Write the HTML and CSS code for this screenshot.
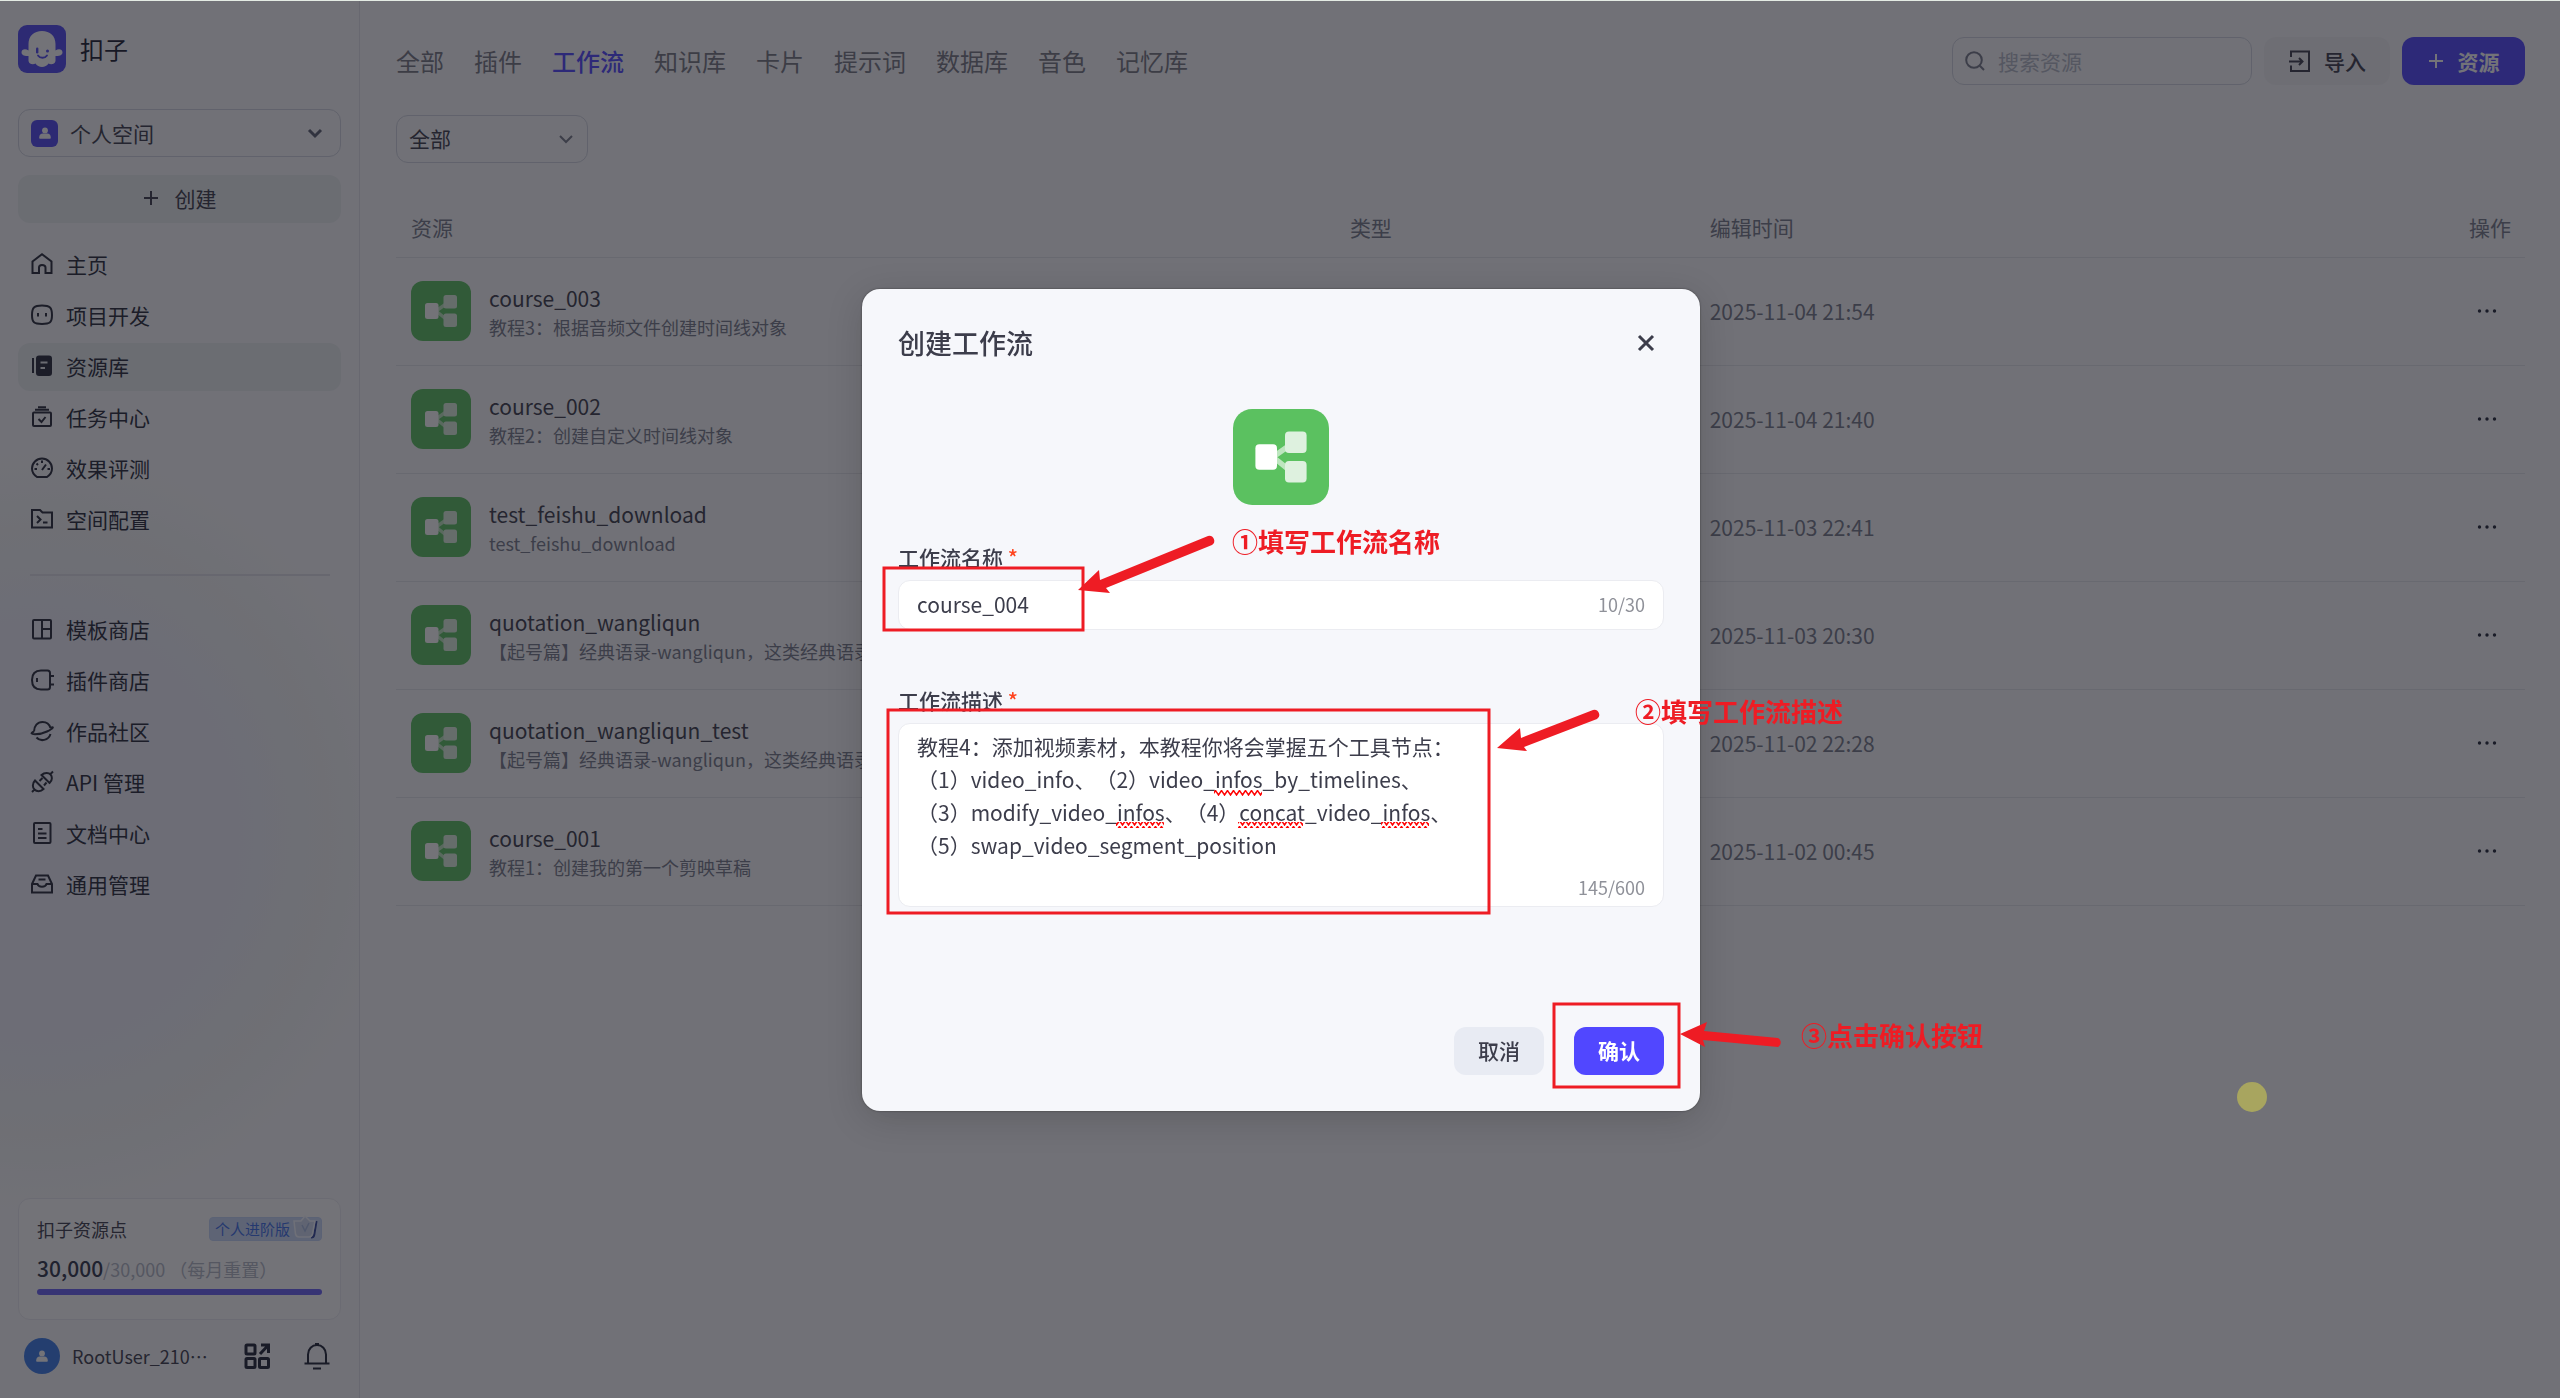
FILE: index.html
```html
<!DOCTYPE html>
<html lang="zh-CN">
<head>
    <meta charset="UTF-8">
    <meta name="viewport" content="width=device-width, initial-scale=1.0">
    <title>扣子 - 资源库</title>
    <link rel="stylesheet" href="styles.css">
</head>
<body>
    <!-- shared icons -->
    <svg class="sprite" aria-hidden="true">
        <symbol id="i-plus" viewBox="0 0 16 16"><path d="M8 1v14M1 8h14"/></symbol>
        <symbol id="i-down" viewBox="0 0 16 16"><path d="M2 5l6 6 6-6"/></symbol>
        <symbol id="i-person" viewBox="0 0 24 24"><circle cx="12" cy="7.5" r="5"/><path d="M2 20c0-5 3-7 6-7h8c3 0 6 2 6 7 0 1-1 2-2 2H4c-1 0-2-1-2-2z"/></symbol>
        <symbol id="i-dots" viewBox="0 0 24 24"><circle cx="4.5" cy="12" r="1.7"/><circle cx="12" cy="12" r="1.7"/><circle cx="19.5" cy="12" r="1.7"/></symbol>
        <symbol id="i-flow" viewBox="0 0 60 60">
            <rect width="60" height="60" rx="12" fill="#5bc160"/>
            <path d="M25 30l10-7M25 30l10 8" stroke="#fff" stroke-opacity=".6" stroke-width="3.4"/>
            <rect x="32.500" y="14" width="13.500" height="13.500" rx="2.500" fill="#def1df"/>
            <rect x="32.500" y="32.500" width="13.500" height="13.500" rx="2.500" fill="#def1df"/>
            <rect x="14" y="22" width="13.500" height="16" rx="2.500" fill="#fff"/>
        </symbol>
    </svg>

    <div class="layout">
        <aside class="sidebar">
            <div class="brand">
                <svg class="logo" viewBox="0 0 48 48">
                    <rect width="48" height="48" rx="9" fill="#5049f2"/>
                    <path fill="#fff" d="M10.500 19C10.500 11 16 6 24 6s13.500 5 13.500 13v6.500c3-2 7-1.500 7 2 0 3-4 3.500-7 3.500V36c-.5 3.500-5 4-7 2.500-2.500 4.500-10.500 4.500-13 0-2 1.500-6.500 1-7-2.500v-5c-3 0-7-.5-7-3.500 0-3.500 4-4 7-2z"/>
                    <rect x="18" y="22.500" width="2.400" height="6" rx="1.200" fill="#5049f2"/>
                    <circle cx="29.500" cy="26" r="1.500" fill="#5049f2"/>
                    <path d="M20 30.500c2 3 7 3 9 0" fill="none" stroke="#5049f2" stroke-width="1.800" stroke-linecap="round"/>
                </svg>
                <span>扣子</span>
            </div>

            <button class="space" type="button">
                <span class="space-icon"><svg class="solid"><use href="#i-person"/></svg></span>
                <span class="space-name">个人空间</span>
                <svg class="line chevron"><use href="#i-down"/></svg>
            </button>
            <button class="create" type="button"><svg class="line"><use href="#i-plus"/></svg>创建</button>

            <nav class="menu">
                <a href="#"><svg viewBox="0 0 24 24"><path d="M2.500 9.500L12 2.200l9.500 7.300V21h-6v-5.500c0-1.500-1-2.500-3.500-2.500s-3 1-3 2.500V21h-6.500z"/></svg>主页</a>
                <a href="#"><svg viewBox="0 0 24 24"><path d="M12 2.500c8 0 10 2 10 9.500s-2 9-10 9-10-1.500-10-9 2-9.500 10-9.500z"/><path d="M8 10v3.500M16 10v3.500"/></svg>项目开发</a>
                <a href="#" class="active"><svg viewBox="0 0 24 24"><path d="M3 4v15"/><rect x="7" y="2.500" width="14" height="18.500" rx="2" fill="currentColor"/><path d="M10.500 8.500h7M10.500 14h4.500" stroke="#e8ecee"/></svg>资源库</a>
                <a href="#"><svg viewBox="0 0 24 24"><rect x="3" y="7.500" width="18" height="13.500" rx="1"/><path d="M5 4.800h14M8 2.200h8M8.500 14l3 3 4-5"/></svg>任务中心</a>
                <a href="#"><svg viewBox="0 0 24 24"><path d="M7 21c-3-2-5-5-5-8.500a10 10 0 0 1 20 0c0 3.500-2 6.500-5 8.500zM12 14l4-5.500M12 4.500v2.500M4.500 13H7M17.500 13H20M6.500 7.500l1.500 1.500"/></svg>效果评测</a>
                <a href="#"><svg viewBox="0 0 24 24"><path d="M2 3h8l2.500 2.500H22V20.500H2zM7 9l3.500 3.500L7 16M13 15.500h4.500"/></svg>空间配置</a>
            </nav>
            <hr>
            <nav class="menu">
                <a href="#"><svg viewBox="0 0 24 24"><rect x="3" y="3" width="18" height="18.500" rx="1"/><path d="M12 3v18.500M12 12h9"/></svg>模板商店</a>
                <a href="#"><svg viewBox="0 0 24 24"><path d="M11 2.500h6.500c2 0 2.500 1 2.500 2.500v14c0 1.500-.5 2.500-2.500 2.500H11c-6 0-9-3-9-9.500s3-9.500 9-9.500zM20 8h4M20 16.500h4M7 10v4"/></svg>插件商店</a>
                <a href="#"><svg viewBox="0 0 24 24"><path d="M4 12.500C4 7 7.500 3 12.500 3c4 0 7 2.500 8 6M4 12.500C-4 16 10 16 17 12.500S24 7 20.500 9M6.500 18.500c4 4.500 12 3 14-3.500"/></svg>作品社区</a>
                <a href="#"><svg viewBox="0 0 24 24"><path d="M2 22l2.500-2.500M5 10.500l8.500 8.500c-3 3-7 2.500-9 .5s-2.500-6 .5-9zM9.500 11l3-3M14 15.500l2.500-3M11.500 5l8 8c3.500-3 2.500-7 1-8.500s-5.500-2.500-9 .5zM20.500 4L23 1.500"/></svg>API 管理</a>
                <a href="#"><svg viewBox="0 0 24 24"><rect x="4" y="2" width="16.500" height="20" rx="1"/><path d="M8 8h4.500M8 12.500h8.500M8 17h8.500"/></svg>文档中心</a>
                <a href="#"><svg viewBox="0 0 24 24"><path d="M2 12l4-8.500h12L22 12v8.500H2zM2 12h5.500c1 3.500 8 3.500 9 0H22M8.500 7.500h7"/></svg>通用管理</a>
            </nav>

            <div class="bottom">
                <section class="credits">
                    <div class="credits-top">
                        <span>扣子资源点</span>
                        <a href="#" class="plan">个人进阶版<svg viewBox="0 0 28 27"><path d="M20 23.500c2 0 3-1 3.300-3L25.500 7" fill="none" stroke="#33479c"/><path d="M3 7h7l4-5 5 5h5l-2.500 13c-.5 2-1.500 3-3.500 3H8c-2 0-3-1-3.500-3z" fill="#cfdaf0" stroke="#f4f8ff" stroke-width="1.500"/><path d="M11 11l3 6 4-8" fill="none" stroke="#a9bbe0" stroke-width="1.500"/></svg></a>
                    </div>
                    <div class="amount"><b>30,000</b>/30,000 （每月重置）</div>
                    <div class="bar"></div>
                </section>
                <div class="user">
                    <span class="avatar"><svg class="solid"><use href="#i-person"/></svg></span>
                    <span class="user-name">RootUser_210…</span>
                    <button type="button" aria-label="应用"><svg viewBox="0 0 28 28"><rect x="3" y="3" width="9" height="9" rx="1"/><rect x="3" y="16.500" width="9" height="9" rx="1"/><rect x="16.500" y="16.500" width="9" height="9" rx="1"/><path d="M17 12l8.500-9M18 3h7.500v8"/></svg></button>
                    <button type="button" aria-label="通知"><svg class="bell" viewBox="0 0 28 28"><path d="M5 21.500V12.500c0-5.500 4-9.500 9-9.500s9 4 9 9.500v9M1.500 21.500h25M10 26.500h8M12 2h4"/></svg></button>
                </div>
            </div>
        </aside>

        <main class="main">
            <header class="topbar">
                <nav class="tabs">
                    <a href="#">全部</a>
                    <a href="#">插件</a>
                    <a href="#" class="current">工作流</a>
                    <a href="#">知识库</a>
                    <a href="#">卡片</a>
                    <a href="#">提示词</a>
                    <a href="#">数据库</a>
                    <a href="#">音色</a>
                    <a href="#">记忆库</a>
                </nav>
                <div class="tools">
                    <label class="search">
                        <svg viewBox="0 0 20 20"><circle cx="9" cy="9" r="7.800"/><path d="M14.800 14.800L19 19"/></svg>
                        <input type="text" placeholder="搜索资源" aria-label="搜索资源">
                    </label>
                    <button type="button" class="import"><svg viewBox="0 0 24 24"><path d="M3 8V2.500h18V22H3v-5.500M1 12.500h13M11 9l3.500 3.500L11 16"/></svg>导入</button>
                    <button type="button" class="primary"><svg class="line"><use href="#i-plus"/></svg>资源</button>
                </div>
            </header>

            <div class="filter">
                <select aria-label="筛选"><option>全部</option></select>
                <svg class="line"><use href="#i-down"/></svg>
            </div>

            <table class="resources">
                <thead>
                    <tr><th class="c-name">资源</th><th class="c-type">类型</th><th>编辑时间</th><th class="c-action">操作</th></tr>
                </thead>
                <tbody>
                    <tr>
                        <td><div class="res"><svg><use href="#i-flow"/></svg><div class="res-text"><p class="name">course_003</p><p class="desc">教程3：根据音频文件创建时间线对象</p></div></div></td>
                        <td></td><td>2025-11-04 21:54</td>
                        <td><button type="button" aria-label="更多"><svg><use href="#i-dots"/></svg></button></td>
                    </tr>
                    <tr>
                        <td><div class="res"><svg><use href="#i-flow"/></svg><div class="res-text"><p class="name">course_002</p><p class="desc">教程2：创建自定义时间线对象</p></div></div></td>
                        <td></td><td>2025-11-04 21:40</td>
                        <td><button type="button" aria-label="更多"><svg><use href="#i-dots"/></svg></button></td>
                    </tr>
                    <tr>
                        <td><div class="res"><svg><use href="#i-flow"/></svg><div class="res-text"><p class="name">test_feishu_download</p><p class="desc">test_feishu_download</p></div></div></td>
                        <td></td><td>2025-11-03 22:41</td>
                        <td><button type="button" aria-label="更多"><svg><use href="#i-dots"/></svg></button></td>
                    </tr>
                    <tr>
                        <td><div class="res"><svg><use href="#i-flow"/></svg><div class="res-text"><p class="name">quotation_wangliqun</p><p class="desc">【起号篇】经典语录-wangliqun，这类经典语录</p></div></div></td>
                        <td></td><td>2025-11-03 20:30</td>
                        <td><button type="button" aria-label="更多"><svg><use href="#i-dots"/></svg></button></td>
                    </tr>
                    <tr>
                        <td><div class="res"><svg><use href="#i-flow"/></svg><div class="res-text"><p class="name">quotation_wangliqun_test</p><p class="desc">【起号篇】经典语录-wangliqun，这类经典语录</p></div></div></td>
                        <td></td><td>2025-11-02 22:28</td>
                        <td><button type="button" aria-label="更多"><svg><use href="#i-dots"/></svg></button></td>
                    </tr>
                    <tr>
                        <td><div class="res"><svg><use href="#i-flow"/></svg><div class="res-text"><p class="name">course_001</p><p class="desc">教程1：创建我的第一个剪映草稿</p></div></div></td>
                        <td></td><td>2025-11-02 00:45</td>
                        <td><button type="button" aria-label="更多"><svg><use href="#i-dots"/></svg></button></td>
                    </tr>
                </tbody>
            </table>
        </main>
    </div>

    <div class="mask">
        <form class="modal" role="dialog" aria-labelledby="modalTitle">
            <div class="modal-head">
                <h2 id="modalTitle">创建工作流</h2>
                <button type="button" aria-label="关闭"><svg viewBox="0 0 18 18"><path d="M2 2l14 14M16 2L2 16"/></svg></button>
            </div>
            <svg class="modal-icon"><use href="#i-flow"/></svg>

            <label class="field-label" for="flowName">工作流名称 <i>*</i></label>
            <div class="field">
                <input type="text" id="flowName" value="course_004">
                <span class="count">10/30</span>
            </div>

            <label class="field-label" for="flowDesc">工作流描述 <i>*</i></label>
            <div class="field area">
                <textarea id="flowDesc" rows="4" spellcheck="false">教程4：添加视频素材，本教程你将会掌握五个工具节点：
（1）video_info、（2）video_infos_by_timelines、
（3）modify_video_infos、（4）concat_video_infos、
（5）swap_video_segment_position</textarea>
                <span class="count">145/600</span>
                <!-- spelling marks -->
                <svg class="spell" width="560" height="120">
                    <defs><pattern id="wave" width="6" height="6" patternUnits="userSpaceOnUse"><path d="M-1.500 0.500L1.500 5l3-4.500L7.500 5" fill="none" stroke="#f00" stroke-width="1.500"/></pattern></defs>
                    <rect x="315" y="66" width="48" height="6" fill="url(#wave)"/>
                    <rect x="217" y="98" width="48" height="6" fill="url(#wave)"/>
                    <rect x="339" y="98" width="65" height="6" fill="url(#wave)"/>
                    <rect x="482" y="98" width="48" height="6" fill="url(#wave)"/>
                </svg>
            </div>

            <div class="modal-foot">
                <button type="button" class="cancel">取消</button>
                <button type="submit" class="confirm">确认</button>
            </div>

            <!-- step-by-step hints drawn over the dialog -->
            <svg class="hints" width="940" height="822">
                <rect x="22" y="279" width="199" height="62"/>
                <rect x="26" y="421" width="601" height="203"/>
                <rect x="692" y="715" width="125" height="83"/>
                <g class="arrows">
                    <path d="M216 301l21-20 1 10 108-44a5 5 0 0 1 4 9l-106 43 4 5z"/>
                    <path d="M635 459l23-20 1 10 72-28a5 5 0 0 1 4 9l-73 28 3 4z"/>
                    <path d="M818 745l27-12-3 9 74 7a5 5 0 0 1 0 9l-75-7 2 7z"/>
                </g>
            </svg>
            <span class="hint hint-name">①填写工作流名称</span>
            <span class="hint hint-desc">②填写工作流描述</span>
            <span class="hint hint-ok">③点击确认按钮</span>
        </form>
        <span class="pointer"></span>
    </div>
</body>
</html>
```

FILE: styles.css
```css
* {
    box-sizing: border-box;
}

body {
    margin: 0;
    font-family: "Noto Sans CJK SC", "Noto Sans", sans-serif;
    font-size: 21px;
    line-height: 30px;
    color: #3c3d4b;
    background-color: #fafafc;
    border-top: 1px solid #e4ebe4;
}

button,
input,
select,
textarea {
    font: inherit;
    color: inherit;
    border: none;
    background: none;
    padding: 0;
    margin: 0;
    outline: none;
}

button {
    display: flex;
    align-items: center;
    justify-content: center;
    cursor: pointer;
}

a {
    color: inherit;
    text-decoration: none;
}

p,
h2 {
    margin: 0;
}

svg {
    flex: none;
    fill: none;
    stroke: currentColor;
    stroke-width: 2;
}

.sprite {
    position: absolute;
    width: 0;
    height: 0;
}

.line {
    width: 16px;
    height: 16px;
}

.solid {
    fill: #fff;
    stroke: none;
}

.layout {
    display: flex;
    min-height: calc(100vh - 1px);
}

/* sidebar */
.sidebar {
    width: 360px;
    flex: none;
    display: flex;
    flex-direction: column;
    padding: 24px 18px;
    border-right: 1px solid #e4e4ea;
    background: radial-gradient(ellipse 360px 380px at 40px 830px, #eff1fb 0%, #f0f1fa 55%, #f4f6f6 80%, #fafafc 100%);
}

.brand {
    display: flex;
    align-items: center;
    gap: 14px;
    font-size: 24px;
    margin-bottom: 36px;
    color: #1a2030;
}

.logo {
    width: 48px;
    height: 48px;
    stroke: none;
}

.space,
.create {
    height: 48px;
    border-radius: 12px;
}

.space {
    border: 1px solid #d2d5e0;
    padding: 0 16px 0 12px;
    margin-bottom: 18px;
    gap: 12px;
}

.space-icon {
    display: flex;
    width: 27px;
    height: 27px;
    border-radius: 6px;
    background-color: #5049f2;
}

.space-icon svg,
.avatar svg {
    width: 14px;
    height: 14px;
    margin: auto;
}

.space-name {
    flex: 1;
    text-align: left;
}

.chevron {
    width: 18px;
    stroke-width: 3;
    color: #5b6072;
}

.create {
    gap: 16px;
    padding-bottom: 2px;
    background-color: #ebeff1;
    margin-bottom: 18px;
}

.menu {
    display: flex;
    flex-direction: column;
    gap: 3px;
}

.menu a {
    display: flex;
    align-items: center;
    gap: 12px;
    height: 48px;
    padding: 0 0 2px 12px;
    border-radius: 12px;
    color: #262a38;
}

.menu svg {
    width: 24px;
    height: 24px;
}

.menu .active {
    background-color: #ebeff1;
}

.sidebar hr {
    width: 300px;
    height: 2px;
    margin: 30px 0 30px 12px;
    border: none;
    background-color: #e0e0e9;
}

.bottom {
    margin-top: auto;
}

.credits {
    height: 122px;
    padding: 18px;
    border: 1px solid #ececf2;
    border-radius: 12px;
    background-color: #fff;
}

.credits-top {
    display: flex;
    align-items: center;
    justify-content: space-between;
    font-size: 18px;
    line-height: 24px;
}

.plan {
    display: flex;
    align-items: center;
    height: 24px;
    padding-left: 5px;
    border-radius: 4px;
    border: 1px solid #c3d4f8;
    background-color: #cbdaf8;
    color: #3d6fe8;
    font-size: 15px;
}

.plan svg {
    width: 28px;
    height: 27px;
    margin: 0 2px 4px 1px;
}

.amount {
    margin-top: 12px;
    font-size: 18px;
    white-space: nowrap;
    color: #b3b8c6;
}

.amount b {
    font-size: 21px;
    font-weight: 500;
    color: #30364a;
}

.bar {
    height: 6px;
    margin-top: 5px;
    border-radius: 3px;
    background-color: #6a61f5;
}

.user {
    display: flex;
    align-items: center;
    padding: 18px 10px 0 6px;
    font-size: 18px;
}

.avatar {
    display: flex;
    flex: none;
    width: 36px;
    height: 36px;
    border-radius: 50%;
    background-color: #3a7be8;
}

.user-name {
    flex: 1;
    min-width: 0;
    margin-left: 12px;
    white-space: nowrap;
}

.user button {
    flex: none;
    width: 28px;
    height: 28px;
    margin-left: 32px;
    color: #1f2536;
}

.user button svg {
    width: 28px;
    height: 28px;
    stroke-width: 3;
}

.user button .bell {
    stroke-width: 2;
}

/* main */
.main {
    flex: 1;
    min-width: 0;
    padding: 36px 35px 0 36px;
}

.topbar,
.tabs,
.tools {
    display: flex;
    align-items: center;
}

.topbar {
    justify-content: space-between;
}

.tabs {
    gap: 30px;
    font-size: 24px;
    color: #777883;
}

.tabs .current {
    color: #5147ff;
    font-weight: 500;
}

.tools {
    gap: 12px;
}

.search {
    display: flex;
    align-items: center;
    gap: 13px;
    width: 300px;
    height: 48px;
    padding-left: 12px;
    border: 1px solid #d2d5e0;
    border-radius: 12px;
    color: #777b8a;
}

.search svg {
    width: 20px;
    height: 20px;
}

.search input {
    width: 200px;
}

.search input::placeholder {
    color: #b3b8c6;
}

.import,
.primary {
    height: 48px;
    border-radius: 12px;
    font-weight: 500;
}

.import {
    width: 126px;
    gap: 12px;
    background-color: #f2f2f6;
}

.import svg {
    width: 24px;
    height: 24px;
}

.primary {
    width: 123px;
    gap: 14px;
    color: #fff;
    font-weight: 700;
    background-color: #5147ff;
}

.filter {
    display: grid;
    width: 192px;
    height: 48px;
    margin-top: 30px;
    border: 1px solid #d2d5e0;
    border-radius: 12px;
    align-items: center;
}

.filter select,
.filter svg {
    grid-area: 1 / 1;
}

.filter select {
    appearance: none;
    height: 100%;
    padding: 0 0 2px 12px;
}

.filter svg {
    justify-self: end;
    margin-right: 13px;
    color: #777b8a;
    pointer-events: none;
}

.resources {
    width: 100%;
    margin-top: 36px;
    table-layout: fixed;
    border-spacing: 0;
    color: #777b8a;
}

.resources th,
.resources td {
    padding: 0 15px 2px;
    text-align: left;
    border-bottom: 1px solid #e4e5ea;
}

.resources th {
    height: 59px;
    font-weight: 400;
}

.resources td {
    height: 108px;
}

.c-name {
    width: 44.1%;
}

.c-type {
    width: 16.9%;
}

.resources .c-action {
    width: 71px;
    padding-right: 0;
}

.res {
    display: flex;
    align-items: center;
    gap: 18px;
}

.res svg {
    width: 60px;
    height: 60px;
    stroke: none;
}

.res-text {
    padding-top: 3px;
}

.name {
    color: #3c3d4b;
}

.desc {
    font-size: 18px;
    line-height: 28px;
    white-space: nowrap;
}

.resources button svg {
    width: 24px;
    height: 24px;
    fill: #1f2536;
    stroke: none;
}

.resources button {
    width: 36px;
    height: 36px;
}

/* dialog */
.mask {
    position: fixed;
    inset: 1px 0 0;
    display: flex;
    align-items: center;
    justify-content: center;
    padding-left: 2px;
    background-color: rgba(22, 22, 30, 0.6);
}

.modal {
    position: relative;
    width: 838px;
    padding: 36px;
    border-radius: 18px;
    background-color: #f6f7fb;
    box-shadow: 0 0 2px rgba(0, 0, 0, 0.5), 0 8px 36px rgba(0, 0, 0, 0.16);
}

.modal-head {
    display: flex;
    align-items: center;
    justify-content: space-between;
    height: 36px;
}

.modal-head h2 {
    font-size: 27px;
    font-weight: 500;
}

.modal-head button {
    width: 36px;
    height: 36px;
}

.modal-head svg {
    width: 18px;
    height: 18px;
    stroke-width: 3;
}

.modal-icon {
    display: block;
    width: 96px;
    height: 96px;
    margin: 48px auto 37px;
    stroke: none;
}

.field-label {
    display: block;
    margin-bottom: 8px;
    font-weight: 500;
}

.field-label i {
    font-style: normal;
    color: #ff441e;
}

.field {
    position: relative;
    display: flex;
    align-items: center;
    height: 50px;
    margin-bottom: 55px;
    padding: 0 18px 2px;
    border: 1px solid #ebecf1;
    border-radius: 12px;
    background-color: #fff;
}

.field input {
    flex: 1;
}

.count {
    font-size: 18px;
    color: #8f9199;
}

.area {
    flex-direction: column;
    align-items: flex-end;
    height: auto;
    padding: 6px 18px 4px;
    margin-bottom: 120px;
}

.area textarea {
    width: 100%;
    height: 142px;
    line-height: 33px;
    resize: none;
    white-space: pre-wrap;
    text-spacing-trim: space-all;
}

.spell {
    position: absolute;
    left: 0;
    top: 0;
    stroke: none;
    pointer-events: none;
}

.modal-foot {
    display: flex;
    justify-content: flex-end;
    gap: 30px;
}

.modal-foot button {
    width: 90px;
    height: 48px;
    padding-bottom: 2px;
    border-radius: 12px;
    font-weight: 500;
}

.cancel {
    background-color: #e8ebf3;
}

.confirm {
    background-color: #5147ff;
    color: #fff;
}

.modal-foot .confirm {
    font-weight: 700;
}

/* red hints */
.hints {
    position: absolute;
    left: 0;
    top: 0;
    overflow: visible;
    stroke: #ee1c24;
    stroke-width: 3;
    pointer-events: none;
}

.arrows {
    fill: #ee1c24;
    stroke: none;
}

.hint {
    position: absolute;
    font-size: 26px;
    font-weight: 700;
    white-space: nowrap;
    color: #ee1c24;
}

.hint-name {
    left: 370px;
    top: 237px;
}

.hint-desc {
    left: 773px;
    top: 407px;
}

.hint-ok {
    left: 939px;
    top: 731px;
}

.pointer {
    position: absolute;
    right: 293px;
    bottom: 286px;
    width: 30px;
    height: 30px;
    border-radius: 50%;
    background-color: #a8a55f;
}
```
